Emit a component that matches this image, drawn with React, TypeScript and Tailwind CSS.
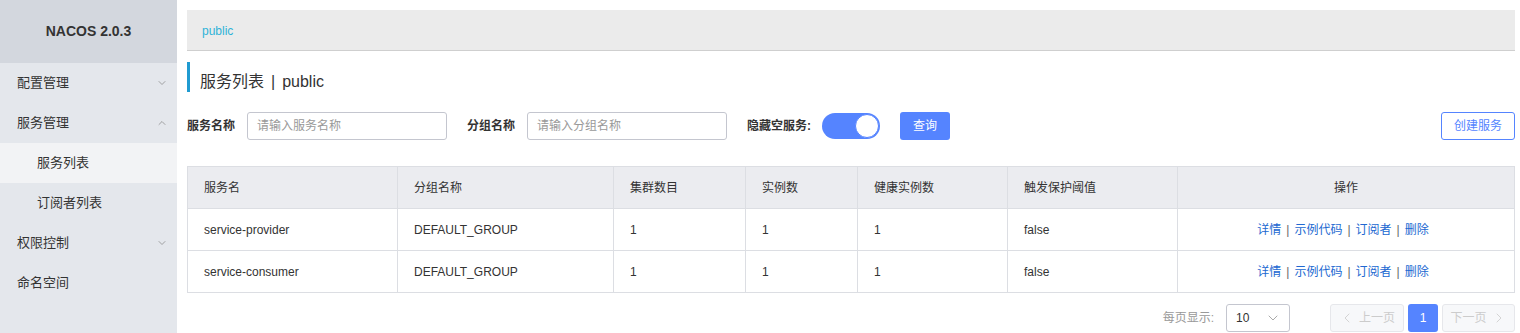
import { ChevronDown, ChevronUp, ChevronLeft, ChevronRight } from "lucide-react";

const FONT = "font-['Helvetica_Neue','Liberation_Sans','Noto_Sans_CJK_SC',sans-serif]";

const services = [
  { name: "service-provider", group: "DEFAULT_GROUP", clusters: 1, instances: 1, healthy: 1, threshold: "false" },
  { name: "service-consumer", group: "DEFAULT_GROUP", clusters: 1, instances: 1, healthy: 1, threshold: "false" },
];

const columns = [
  { title: "服务名", w: "w-[210px]" },
  { title: "分组名称", w: "w-[216px]" },
  { title: "集群数目", w: "w-[132px]" },
  { title: "实例数", w: "w-[112px]" },
  { title: "健康实例数", w: "w-[150px]" },
  { title: "触发保护阈值", w: "w-[170px]" },
];

function MenuItem({ label, open, chevron }: { label: string; open?: boolean; chevron?: boolean }) {
  return (
    <div className="flex h-10 items-center justify-between pl-[17px] pr-[9px] text-[13px] text-[#333]">
      <span>{label}</span>
      {chevron &&
        (open ? (
          <ChevronUp className="h-3 w-3 text-[#888]" strokeWidth={1.5} />
        ) : (
          <ChevronDown className="h-3 w-3 text-[#888]" strokeWidth={1.5} />
        ))}
    </div>
  );
}

function Sidebar() {
  return (
    <aside className="flex w-[177px] shrink-0 flex-col bg-[#e4e7ec]">
      <div className="flex h-[63px] items-center justify-center bg-[#d3d7de] text-[14px] font-bold text-[#333]">
        NACOS 2.0.3
      </div>
      <MenuItem label="配置管理" chevron />
      <MenuItem label="服务管理" chevron open />
      <div className="flex h-10 items-center bg-[#f2f3f5] pl-[37px] text-[13px] text-[#333]">服务列表</div>
      <div className="flex h-10 items-center pl-[37px] text-[13px] text-[#333]">订阅者列表</div>
      <MenuItem label="权限控制" chevron />
      <MenuItem label="命名空间" />
    </aside>
  );
}

function Field({ label, placeholder }: { label: string; placeholder: string }) {
  return (
    <div className="flex items-center">
      <span className="mr-3 text-[12px] font-bold text-[#333]">{label}</span>
      <div className="flex h-7 w-[200px] items-center rounded-[3px] border border-[#c4c6cf] bg-white px-[9px] text-[12px] text-[#999]">
        {placeholder}
      </div>
    </div>
  );
}

export default function App() {
  return (
    <div className={`flex h-[333px] w-[1520px] bg-white ${FONT}`}>
      <Sidebar />
      <main className="flex min-w-0 flex-1 flex-col pl-[10px] pr-[5px] pt-[10px]">
        <div className="flex h-[41px] items-center border-b border-[#cfcfcf] bg-[#ebebeb] px-[15px] pt-[2px] text-[12px] text-[#2fb3d8]">
          public
        </div>

        <div className="mt-[11px] flex h-[30px] items-center border-l-[3px] border-[#209bd1] pl-[10px] pt-[9px] text-[16px] text-[#333]">
          服务列表<span className="mx-[7px]">|</span>public
        </div>

        <div className="mt-5 flex h-7 items-center">
          <Field label="服务名称" placeholder="请输入服务名称" />
          <div className="ml-[20px]">
            <Field label="分组名称" placeholder="请输入分组名称" />
          </div>
          <span className="ml-[20px] mr-[11px] text-[12px] font-bold text-[#333]">隐藏空服务:</span>
          <div className="flex h-[26px] w-[58px] items-center justify-end rounded-full bg-[#5584ff] p-[1px]">
            <div className="h-6 w-6 rounded-full border border-[#5584ff] bg-white" />
          </div>
          <button className="ml-[20px] h-7 w-[50px] rounded-[3px] bg-[#5584ff] text-[12px] text-white">查询</button>
          <button className="ml-auto h-7 w-[74px] rounded-[3px] border border-[#5584ff] bg-white text-[12px] text-[#5584ff]">
            创建服务
          </button>
        </div>

        <table className="mt-[26px] w-full border-collapse text-[12px] text-[#333]">
          <thead>
            <tr className="h-[42px] bg-[#ebecf0]">
              {columns.map((c) => (
                <th key={c.title} className={`${c.w} border border-[#dcdee3] px-4 text-left font-normal`}>
                  {c.title}
                </th>
              ))}
              <th className="border border-[#dcdee3] px-4 text-center font-normal">操作</th>
            </tr>
          </thead>
          <tbody>
            {services.map((s) => (
              <tr key={s.name} className="h-[42px]">
                <td className="border border-[#dcdee3] px-4">{s.name}</td>
                <td className="border border-[#dcdee3] px-4">{s.group}</td>
                <td className="border border-[#dcdee3] px-4">{s.clusters}</td>
                <td className="border border-[#dcdee3] px-4">{s.instances}</td>
                <td className="border border-[#dcdee3] px-4">{s.healthy}</td>
                <td className="border border-[#dcdee3] px-4">{s.threshold}</td>
                <td className="border border-[#dcdee3] pl-[10px] pr-4 text-center">
                  <a className="text-[#2168d1]">详情</a>
                  <span className="mx-[5px] text-[#666]">|</span>
                  <a className="text-[#2168d1]">示例代码</a>
                  <span className="mx-[5px] text-[#666]">|</span>
                  <a className="text-[#2168d1]">订阅者</a>
                  <span className="mx-[5px] text-[#666]">|</span>
                  <a className="text-[#2168d1]">删除</a>
                </td>
              </tr>
            ))}
          </tbody>
        </table>

        <div className="mt-[11px] flex h-7 items-center justify-end text-[12px]">
          <span className="mr-3 text-[#999]">每页显示:</span>
          <div className="flex h-7 w-16 items-center justify-between rounded-[3px] border border-[#c4c6cf] pl-[9px] pr-[8px] text-[#333]">
            <span>10</span>
            <ChevronDown className="h-4 w-4 text-[#999]" strokeWidth={1.25} />
          </div>
          <button className="ml-10 flex h-7 w-[74px] items-center justify-center gap-1 rounded-[3px] border border-[#e6e7eb] bg-[#f7f8fa] text-[#ccc]">
            <ChevronLeft className="h-4 w-4" strokeWidth={1.25} />
            上一页
          </button>
          <button className="ml-1 h-7 w-[30px] rounded-[3px] bg-[#5584ff] text-white">1</button>
          <button className="ml-1 flex h-7 w-[73px] items-center justify-center gap-1 rounded-[3px] border border-[#e6e7eb] bg-[#f7f8fa] text-[#ccc]">
            下一页
            <ChevronRight className="h-4 w-4" strokeWidth={1.25} />
          </button>
        </div>
      </main>
    </div>
  );
}
